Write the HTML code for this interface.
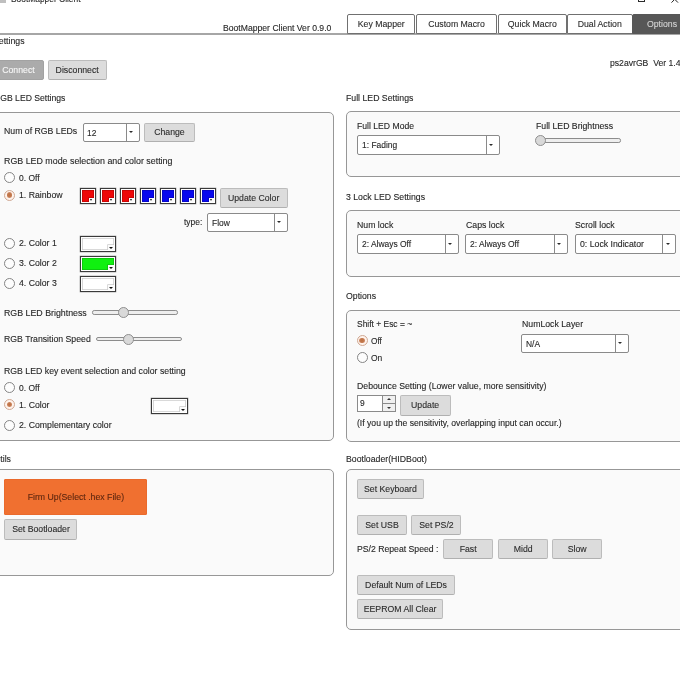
<!DOCTYPE html>
<html lang="en">
<head>
<meta charset="utf-8">
<title>BootMapper Client</title>
<style>
*{box-sizing:border-box;margin:0;padding:0}
html,body{width:680px;height:680px;overflow:hidden;background:#fff}
body{position:relative;font-family:"Liberation Sans",Arial,sans-serif;font-size:9.4px;color:#262626;-webkit-text-stroke:0.12px}
#app{position:absolute;left:0;top:0;width:680px;height:680px;overflow:hidden;background:#fff;will-change:transform}
#app>*{position:absolute}
.t{height:12px;line-height:12px;white-space:nowrap;transform:scaleX(0.93);transform-origin:0 50%}
.btn span,.tab span{display:inline-block;transform:scaleX(0.93);transform-origin:50% 50%}
.cbt,.spt{transform:scaleX(0.9);transform-origin:0 50%}
.grp{background:#fafafa;border:1px solid #979797;border-radius:5px}
.btn{background:#dcdcdc;border:1px solid #bcbcbc;border-bottom-color:#b0b0b0;border-radius:2px;text-align:center;white-space:nowrap;color:#2c2c2c}
.btn.dark{background:#ababab;border-color:#a2a2a2;color:#f6f6f6;text-align:right;padding-right:7.5px}
.btn.org{background:#f07030;border-color:#ea6a2c;color:#5e2710;border-radius:1px}
.cb{background:#fff;border:1px solid #8a8a8a;border-radius:2px;white-space:nowrap}
.cbt{position:absolute;left:4.5px;top:0}
.cbd{position:absolute;right:0;top:0;bottom:0;border-left:1px solid #8a8a8a}
.cbd b{position:absolute;left:50%;top:50%;margin-left:-3.3px;margin-top:-1px;border-left:2.8px solid transparent;border-right:2.8px solid transparent;border-top:2.8px solid #2a2a2a}
.rd{width:11px;height:11px;border-radius:50%;border:1.2px solid #858585;background:#fdfdfd}
.rd.on{border-color:#cfa893;background:#fff3ec}
.rd.on::after{content:"";position:absolute;left:1.5px;top:1.5px;width:5.6px;height:5.6px;border-radius:50%;background:radial-gradient(circle,#bd6f40 0,#c47a50 50%,#e0b096 100%)}
.sw{border:1px solid #3a3a3a;background:#fff;padding:1px;box-shadow:0 0 0 0.3px rgba(40,40,40,.5)}
.swc{width:100%;height:100%;box-shadow:inset 0 0 0 0.8px rgba(0,0,0,.2)}
.swn{position:absolute;right:1px;bottom:1px;width:4.8px;height:4.2px;background:#fbfbfb;box-shadow:-0.7px -0.7px 0 0 rgba(0,0,0,.22)}
.swn b{position:absolute;left:0.8px;top:1.2px;border-left:1.7px solid transparent;border-right:1.7px solid transparent;border-top:2.2px solid #111}
.wd .swn{width:6px;height:4.8px}
.wd .swn b{left:1.2px;top:1.4px;border-left-width:2px;border-right-width:2px;border-top-width:2.4px}
.sl{height:4.4px;border:1px solid #8c8c8c;border-radius:2.2px;background:#eee}
.th{width:11px;height:11px;border-radius:50%;border:1px solid #8f8f8f;background:#d9d9d9}
.hline{left:0;top:33px;width:680px;height:1.5px;background:#a6a6a6}
.tab{top:14px;height:19.5px;line-height:17px;border:1px solid #707070;border-radius:2px 2px 0 0;background:#fff;text-align:center;white-space:nowrap;color:#2c2c2c}
.tab.sel{background:#575757;border-color:#575757;color:#d4d4d4;text-align:left}
.tab.sel span{text-align:center}
.title{left:10.7px;top:-6.9px;height:12px;line-height:12px;font-size:9.6px;color:#2a2a2a;white-space:nowrap;transform:scaleX(0.875);transform-origin:0 50%}
.ticon{left:0;top:0;width:5.5px;height:2.5px;background:#8a8a8a;opacity:.55}
.wmax{left:637.6px;top:-5px;width:7.2px;height:7.4px;border:1px solid #2a2a2a}
.wclose{left:670.5px;top:0;overflow:visible}
.sp{background:#fff;border:1px solid #8a8a8a;white-space:nowrap;line-height:14px}
.spt{position:absolute;left:2.2px;top:-0.3px}
.spb{position:absolute;right:0;top:0;bottom:0;width:12.5px;border-left:1px solid #8a8a8a;background:#f0f0f0}
.spb u{position:absolute;left:0;right:0;top:6.5px;height:1px;background:#8a8a8a}
.spb b{position:absolute;left:3.5px;border-left:2px solid transparent;border-right:2px solid transparent}
.spb .up{top:2px;border-bottom:2.5px solid #333}
.spb .dn{bottom:2px;border-top:2.5px solid #333}
</style>
</head>
<body>
<div id="app">
<div class="ticon"></div>
<div class="title">BootMapper Client</div>
<div class="wmax"></div>
<svg class="wclose" width="12" height="6" viewBox="0 0 12 6"><path d="M0.5 -4 L7 2.6 M7 -4 L0.5 2.6" stroke="#222" stroke-width="1" fill="none"/></svg>
<div class="hline"></div>
<div class="t " style="left:223px;top:22.4px;transform:scaleX(0.92);">BootMapper Client Ver 0.9.0</div>
<div class="tab" style="left:347px;width:68px"><span>Key Mapper</span></div>
<div class="tab" style="left:415.5px;width:81.5px"><span>Custom Macro</span></div>
<div class="tab" style="left:497.5px;width:69.0px"><span>Quick Macro</span></div>
<div class="tab" style="left:567px;width:65.5px"><span>Dual Action</span></div>
<div class="tab sel" style="left:632px;width:60px"><span style="width:58px">Options</span></div>
<div class="t " style="left:-7px;top:35.0px;">Settings</div>
<div class="btn dark" style="left:-12px;top:60px;width:56px;height:20px;line-height:17.4px"><span>Connect</span></div>
<div class="btn " style="left:48px;top:60px;width:59px;height:20px;line-height:17.4px"><span>Disconnect</span></div>
<div class="t " style="left:-6.5px;top:91.5px;transform:scaleX(0.92);">RGB LED Settings</div>
<div class="grp" style="left:-10px;top:111.5px;width:344px;height:329.5px"></div>
<div class="t " style="left:4px;top:125.0px;">Num of RGB LEDs</div>
<div class="cb" style="left:83px;top:122.5px;width:56.5px;height:19.5px;line-height:17.9px"><span class="cbt" style="left:2.7px">12</span><i class="cbd" style="width:12.6px"><b></b></i></div>
<div class="btn " style="left:144px;top:122.5px;width:50.5px;height:19.5px;line-height:16.9px"><span>Change</span></div>
<div class="t " style="left:4px;top:155.4px;transform:scaleX(0.945);">RGB LED mode selection and color setting</div>
<div class="rd" style="left:4.0px;top:172.0px"></div>
<div class="t " style="left:18.5px;top:171.5px;transform:scaleX(0.9);">0. Off</div>
<div class="rd on" style="left:4.0px;top:189.5px"></div>
<div class="t " style="left:18.5px;top:189.0px;">1. Rainbow</div>
<div class="sw" style="left:80px;top:188px;width:16px;height:16px"><div class="swc" style="background:#ee0808"></div><div class="swn"><b></b></div></div>
<div class="sw" style="left:100px;top:188px;width:16px;height:16px"><div class="swc" style="background:#ee0808"></div><div class="swn"><b></b></div></div>
<div class="sw" style="left:120px;top:188px;width:16px;height:16px"><div class="swc" style="background:#ee0808"></div><div class="swn"><b></b></div></div>
<div class="sw" style="left:140px;top:188px;width:16px;height:16px"><div class="swc" style="background:#0808ee"></div><div class="swn"><b></b></div></div>
<div class="sw" style="left:160px;top:188px;width:16px;height:16px"><div class="swc" style="background:#0808ee"></div><div class="swn"><b></b></div></div>
<div class="sw" style="left:180px;top:188px;width:16px;height:16px"><div class="swc" style="background:#0808ee"></div><div class="swn"><b></b></div></div>
<div class="sw" style="left:200px;top:188px;width:16px;height:16px"><div class="swc" style="background:#0808ee"></div><div class="swn"><b></b></div></div>
<div class="btn " style="left:220px;top:188px;width:67.5px;height:20px;line-height:17.4px"><span>Update Color</span></div>
<div class="t " style="left:184px;top:216.0px;transform:scaleX(0.9);">type:</div>
<div class="cb" style="left:207px;top:212.5px;width:80.5px;height:19.5px;line-height:17.9px"><span class="cbt" style="left:3.8px">Flow</span><i class="cbd" style="width:12.9px"><b></b></i></div>
<div class="rd" style="left:4.0px;top:237.5px"></div>
<div class="t " style="left:18.5px;top:237.0px;">2. Color 1</div>
<div class="sw wd" style="left:80px;top:236px;width:36px;height:16px"><div class="swc" style="background:#fff"></div><div class="swn"><b></b></div></div>
<div class="rd" style="left:4.0px;top:257.5px"></div>
<div class="t " style="left:18.5px;top:257.0px;">3. Color 2</div>
<div class="sw wd" style="left:80px;top:256px;width:36px;height:16px"><div class="swc" style="background:#10f010"></div><div class="swn"><b></b></div></div>
<div class="rd" style="left:4.0px;top:277.5px"></div>
<div class="t " style="left:18.5px;top:277.0px;">4. Color 3</div>
<div class="sw wd" style="left:80px;top:276px;width:36px;height:16px"><div class="swc" style="background:#fff"></div><div class="swn"><b></b></div></div>
<div class="t " style="left:4px;top:306.5px;transform:scaleX(0.94);">RGB LED Brightness</div>
<div class="sl" style="left:92px;top:310.40000000000003px;width:86px"></div>
<div class="th" style="left:117.5px;top:307.1px"></div>
<div class="t " style="left:4px;top:333.0px;">RGB Transition Speed</div>
<div class="sl" style="left:96px;top:337.1px;width:86.30000000000001px"></div>
<div class="th" style="left:122.5px;top:333.8px"></div>
<div class="t " style="left:4px;top:365.0px;transform:scaleX(0.932);">RGB LED key event selection and color setting</div>
<div class="rd" style="left:4.0px;top:382.0px"></div>
<div class="t " style="left:18.5px;top:381.5px;transform:scaleX(0.9);">0. Off</div>
<div class="rd on" style="left:4.0px;top:399.0px"></div>
<div class="t " style="left:18.5px;top:398.5px;">1. Color</div>
<div class="sw wd" style="left:151px;top:398px;width:36.5px;height:16px"><div class="swc" style="background:#fff"></div><div class="swn"><b></b></div></div>
<div class="rd" style="left:4.0px;top:419.5px"></div>
<div class="t " style="left:18.5px;top:419.0px;">2. Complementary color</div>
<div class="t " style="left:-6.2px;top:452.5px;">Utils</div>
<div class="grp" style="left:-10px;top:468.5px;width:344px;height:107.0px"></div>
<div class="btn org" style="left:4.25px;top:479px;width:142.75px;height:36px;line-height:33.4px"><span>Firm Up(Select .hex File)</span></div>
<div class="btn " style="left:4.25px;top:519px;width:72.75px;height:20.5px;line-height:17.9px"><span>Set Bootloader</span></div>
<div class="t " style="left:609.5px;top:57.3px;transform:scaleX(0.92);">ps2avrGB&nbsp; Ver 1.4</div>
<div class="t " style="left:346px;top:91.5px;">Full LED Settings</div>
<div class="grp" style="left:346px;top:111.2px;width:354px;height:65.99999999999999px"></div>
<div class="t " style="left:356.5px;top:119.5px;transform:scaleX(0.92);">Full LED Mode</div>
<div class="cb" style="left:357px;top:135px;width:142.5px;height:19.5px;line-height:17.9px"><span class="cbt" style="left:3.8px">1: Fading</span><i class="cbd" style="width:12.9px"><b></b></i></div>
<div class="t " style="left:535.5px;top:119.5px;">Full LED Brightness</div>
<div class="sl" style="left:536px;top:138.3px;width:85px"></div>
<div class="th" style="left:535.0px;top:135.0px"></div>
<div class="t " style="left:346px;top:191.0px;">3 Lock LED Settings</div>
<div class="grp" style="left:346px;top:210px;width:354px;height:66.5px"></div>
<div class="t " style="left:356.5px;top:218.6px;">Num lock</div>
<div class="cb" style="left:357px;top:234px;width:101.5px;height:19.5px;line-height:17.9px"><span class="cbt" style="left:3.8px">2: Always Off</span><i class="cbd" style="width:12.9px"><b></b></i></div>
<div class="t " style="left:465.5px;top:218.6px;">Caps lock</div>
<div class="cb" style="left:465px;top:234px;width:102.5px;height:19.5px;line-height:17.9px"><span class="cbt" style="left:3.8px">2: Always Off</span><i class="cbd" style="width:12.9px"><b></b></i></div>
<div class="t " style="left:574.5px;top:218.6px;">Scroll lock</div>
<div class="cb" style="left:575px;top:234px;width:101.20000000000005px;height:19.5px;line-height:17.9px"><span class="cbt" style="left:3.8px;transform:scaleX(0.93)">0: Lock Indicator</span><i class="cbd" style="width:12.9px"><b></b></i></div>
<div class="t " style="left:346px;top:290.0px;">Options</div>
<div class="grp" style="left:346px;top:309.5px;width:354px;height:132.0px"></div>
<div class="t " style="left:356.5px;top:318.0px;transform:scaleX(0.9);">Shift + Esc = ~</div>
<div class="rd on" style="left:356.5px;top:335.0px"></div>
<div class="t " style="left:371px;top:334.5px;transform:scaleX(0.88);">Off</div>
<div class="rd" style="left:356.5px;top:352.0px"></div>
<div class="t " style="left:371px;top:351.5px;transform:scaleX(0.9);">On</div>
<div class="t " style="left:522px;top:318.0px;">NumLock Layer</div>
<div class="cb" style="left:521px;top:333.5px;width:107.5px;height:19.0px;line-height:17.4px"><span class="cbt" style="left:3.8px">N/A</span><i class="cbd" style="width:12.9px"><b></b></i></div>
<div class="t " style="left:356.5px;top:380.0px;">Debounce Setting (Lower value, more sensitivity)</div>
<div class="sp" style="left:357px;top:395.3px;width:38.5px;height:16.7px"><span class="spt">9</span><i class="spb"><b class="up"></b><u></u><b class="dn"></b></i></div>
<div class="btn " style="left:400.25px;top:395.3px;width:50.35000000000002px;height:20.30000000000001px;line-height:17.70000000000001px"><span>Update</span></div>
<div class="t " style="left:356.5px;top:417.3px;transform:scaleX(0.92);">(If you up the sensitivity, overlapping input can occur.)</div>
<div class="t " style="left:346px;top:453.0px;">Bootloader(HIDBoot)</div>
<div class="grp" style="left:346px;top:469px;width:354px;height:160.5px"></div>
<div class="btn " style="left:357px;top:479px;width:67px;height:20px;line-height:17.4px"><span>Set Keyboard</span></div>
<div class="btn " style="left:357px;top:515px;width:50px;height:20px;line-height:17.4px"><span>Set USB</span></div>
<div class="btn " style="left:411px;top:515px;width:50.25px;height:20px;line-height:17.4px"><span>Set PS/2</span></div>
<div class="t " style="left:356.5px;top:542.7px;transform:scaleX(0.925);">PS/2 Repeat Speed :</div>
<div class="btn " style="left:443px;top:539px;width:50px;height:20px;line-height:17.4px"><span>Fast</span></div>
<div class="btn " style="left:498px;top:539px;width:49.5px;height:20px;line-height:17.4px"><span>Midd</span></div>
<div class="btn " style="left:552px;top:539px;width:50px;height:20px;line-height:17.4px"><span>Slow</span></div>
<div class="btn " style="left:357px;top:575px;width:98px;height:20px;line-height:17.4px"><span>Default Num of LEDs</span></div>
<div class="btn " style="left:357px;top:599px;width:85.5px;height:20px;line-height:17.4px"><span>EEPROM All Clear</span></div>
</div>
</body>
</html>
